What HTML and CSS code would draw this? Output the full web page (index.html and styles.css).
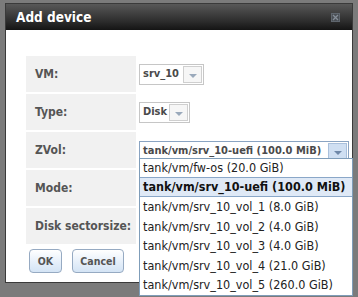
FILE: index.html
```html
<!DOCTYPE html>
<html>
<head>
<meta charset="utf-8">
<link rel="stylesheet" href="styles.css">
</head>
<body>
<div class="dialog">
  <div class="titlebar">
    <span class="title">Add device</span>
    <span class="close"><svg width="9" height="9" viewBox="0 0 9 9"><rect x="0.5" y="0.5" width="8" height="8" fill="#4a4f55" stroke="#5f666e"/><path d="M2 2 L7 7 M7 2 L2 7" stroke="#868e98" stroke-width="1.3"/></svg></span>
  </div>
  <div class="content">
    <div class="form">
      <div class="row"><div class="label">VM:</div><div class="value"><div class="select w-vm"><span class="sel-text">srv_10</span><span class="arrow"></span></div></div></div>
      <div class="row"><div class="label">Type:</div><div class="value"><div class="select w-type"><span class="sel-text">Disk</span><span class="arrow"></span></div></div></div>
      <div class="row"><div class="label">ZVol:</div><div class="value"><div class="select open w-zvol"><span class="sel-text">tank/vm/srv_10-uefi (100.0 MiB)</span><span class="arrow"></span></div></div></div>
      <div class="row"><div class="label">Mode:</div><div class="value"></div></div>
      <div class="row"><div class="label">Disk sectorsize:</div><div class="value"></div></div>
    </div>
    <div class="buttons">
      <button class="btn btn-ok">OK</button>
      <button class="btn btn-cancel">Cancel</button>
    </div>
  </div>
</div>
<ul class="dropdown">
  <li class="opt">tank/vm/fw-os (20.0 GiB)</li>
  <li class="opt sel">tank/vm/srv_10-uefi (100.0 MiB)</li>
  <li class="opt">tank/vm/srv_10_vol_1 (8.0 GiB)</li>
  <li class="opt">tank/vm/srv_10_vol_2 (4.0 GiB)</li>
  <li class="opt">tank/vm/srv_10_vol_3 (4.0 GiB)</li>
  <li class="opt">tank/vm/srv_10_vol_4 (21.0 GiB)</li>
  <li class="opt">tank/vm/srv_10_vol_5 (260.0 GiB)</li>
</ul>
</body>
</html>
```
FILE: styles.css
```css
html, body {
  margin: 0;
  padding: 0;
}
body {
  background: #7b7b7b;
  width: 358px;
  height: 297px;
  overflow: hidden;
  position: relative;
  font-family: "DejaVu Sans", Verdana, sans-serif;
}
.dialog {
  margin: 3px 0 0 5px;
  width: 346px;
  height: 278px;
  border: 1px solid #3a3a3a;
  background: #ffffff;
}
.titlebar {
  height: 26px;
  background: linear-gradient(#585858, #2a2a2a 70%, #141414);
  display: flex;
  align-items: center;
  justify-content: space-between;
  padding: 0 12px 0 10px;
}
.title {
  color: #ffffff;
  font-weight: bold;
  font-size: 13.5px;
  font-family: "DejaVu Sans Condensed", "DejaVu Sans", sans-serif;
}
.close {
  display: flex;
  width: 9px;
  height: 9px;
}
.content {
  padding: 26px 0 0 20px;
}
.form {
  display: flex;
  flex-direction: column;
  gap: 2px;
}
.row {
  display: flex;
  height: 36px;
}
.label {
  width: 101px;
  background: #f1f1f1;
  padding-left: 9px;
  display: flex;
  align-items: center;
  color: #555555;
  font-weight: bold;
  font-size: 12px;
  font-family: "DejaVu Sans Condensed", "DejaVu Sans", sans-serif;
}
.value {
  flex: 1;
  padding-left: 3px;
  display: flex;
  align-items: center;
}
.select {
  height: 19px;
  border: 1px solid #c6c6c6;
  display: flex;
  align-items: stretch;
  background: #fff;
  box-sizing: content-box;
}
.sel-text {
  padding: 0 3px 0 3px;
  display: flex;
  align-items: center;
  color: #4a4a4a;
  font-weight: bold;
  font-size: 11px;
  line-height: 14px;
  font-family: "DejaVu Sans Condensed", "DejaVu Sans", sans-serif;
  white-space: nowrap;
  overflow: hidden;
}
.w-vm .sel-text { width: 36px; }
.w-type .sel-text { width: 22px; }
.w-zvol { margin-top: 2px; border-color: #8aa4c2; }
.w-zvol .sel-text { width: 181px; }
.arrow {
  width: 17px;
  border: 1px solid #cfcfcf;
  margin: 1px;
  background: #f6f6f6;
  position: relative;
}
.arrow::after {
  content: "";
  position: absolute;
  left: 5px;
  top: 7px;
  border-left: 4px solid transparent;
  border-right: 4px solid transparent;
  border-top: 4px solid #9aa9bb;
}
.open .arrow {
  background: #cfdff2;
  border-color: #a9c0dc;
}
.open .arrow::after {
  border-top-color: #6f88a8;
}
.buttons {
  display: flex;
  gap: 10px;
  padding: 5px 0 0 3px;
}
.btn {
  height: 24px;
  border: 1px solid #96aac2;
  border-radius: 4px;
  background: linear-gradient(#ffffff, #e4eef9 60%, #d4e4f5);
  color: #555555;
  font-weight: bold;
  font-size: 10.5px;
  font-family: "DejaVu Sans Condensed", "DejaVu Sans", sans-serif;
  padding: 0;
}
.btn-ok { width: 33px; }
.btn-cancel { width: 52px; }
.dropdown {
  position: absolute;
  left: 139px;
  top: 158px;
  width: 212px;
  margin: 0;
  padding: 0;
  list-style: none;
  background: #ffffff;
  border: 1px solid #7f9db9;
}
.opt {
  height: 19.5px;
  line-height: 19.5px;
  padding-left: 3px;
  font-size: 12.5px;
  color: #222222;
  font-family: "DejaVu Sans Condensed", "DejaVu Sans", sans-serif;
  white-space: nowrap;
  overflow: hidden;
}
.opt:first-child {
  height: 18px;
  line-height: 18px;
}
.opt.sel {
  height: 18px;
  line-height: 18px;
  background: #dfe9f6;
  border-top: 1px solid #8aa7c8;
  border-bottom: 1px solid #8aa7c8;
  font-weight: bold;
  color: #111111;
}
```
